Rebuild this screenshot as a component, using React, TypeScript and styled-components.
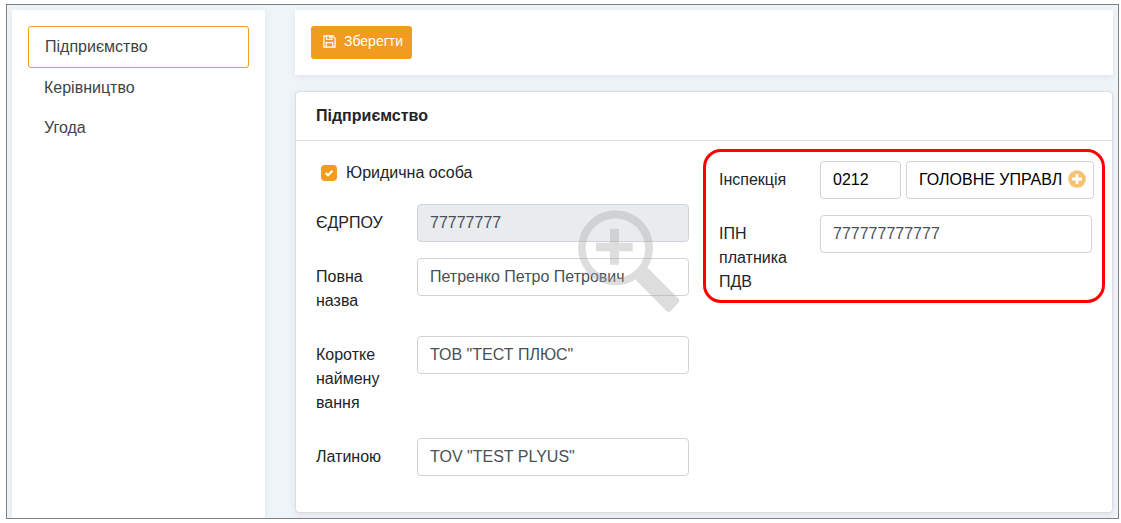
import React from 'react';
import styled, { createGlobalStyle } from 'styled-components';

const GlobalStyle = createGlobalStyle`
  *, *::before, *::after { box-sizing: border-box; }
  body {
    margin: 0;
    background: #fff;
    color: #212529;
    font: 400 16px/24px "Liberation Sans", Arial, sans-serif;
  }
`;

const Frame = styled.div`
  display: flex;
  align-items: flex-start;
  gap: 30px;
  width: 1113px;
  height: 515px;
  margin: 4px 0 0 6px;
  padding: 5px 5px 0;
  border: 1px solid #808080;
  background: #eff4f8;
  overflow: hidden;
`;

const Sidebar = styled.nav`
  flex: none;
  display: flex;
  flex-direction: column;
  width: 253px;
  height: 530px;
  padding: 16px;
  background: #fff;
  box-shadow: 0 2px 8px rgba(60, 90, 110, 0.08);
`;

const NavItem = styled.a<{ $active?: boolean }>`
  width: 221px;
  height: ${p => (p.$active ? 42 : 40)}px;
  padding: ${p => (p.$active ? '8px 16px' : '8px 16px')};
  border: ${p => (p.$active ? '1px solid #f29c1f' : '0')};
  border-radius: 3px;
  color: #3e4348;
`;

const Main = styled.main`
  display: flex;
  flex-direction: column;
  gap: 16px;
  width: 818px;
`;

const Toolbar = styled.div`
  height: 65px;
  padding: 16px;
  background: #fff;
  box-shadow: 0 2px 6px rgba(60, 90, 110, 0.09);
`;

const SaveButton = styled.button`
  display: flex;
  align-items: center;
  gap: 8px;
  width: 101px;
  height: 33px;
  padding: 0 0 2px 12px;
  border: 0;
  border-radius: 3px;
  background: #f29c1f;
  color: #fff;
  font: 14px/21px "Liberation Sans", Arial, sans-serif;
`;

const Card = styled.section`
  height: 422px;
  border: 1px solid #dcdddf;
  border-radius: 4px;
  background: #fff;
  box-shadow: 0 2px 6px rgba(60, 80, 100, 0.1);
`;

const CardHeader = styled.h2`
  height: 49px;
  margin: 0;
  padding: 12px 20px;
  border-bottom: 1px solid #dcdddf;
  font-size: 16px;
  line-height: 24px;
  font-weight: 700;
`;

const CardBody = styled.div`
  position: relative;
  display: flex;
  align-items: flex-start;
  padding: 8px 7px 0 20px;
`;

const LeftColumn = styled.div`
  display: flex;
  flex-direction: column;
  gap: 16px;
  width: 373px;
  padding-top: 12px;
`;

const CheckRow = styled.label`
  display: flex;
  align-items: center;
  gap: 9px;
  height: 24px;
  margin-bottom: 3px;
  padding-left: 5px;
`;

const CheckMark = styled.span`
  display: flex;
  width: 16px;
  height: 16px;
  border-radius: 4px;
  background: #f29c1f;
`;

const Field = styled.div`
  display: flex;
  align-items: flex-start;
`;

const Label = styled.label`
  flex: none;
  width: 101px;
  padding: 7px 0;
`;

const Input = styled.div<{ $width?: number; $disabled?: boolean; $dark?: boolean }>`
  display: flex;
  align-items: center;
  justify-content: space-between;
  flex: none;
  width: ${p => p.$width ?? 272}px;
  height: 38px;
  padding: 0 7px 0 12px;
  border: 1px solid #ced4da;
  border-radius: 4px;
  background: ${p => (p.$disabled ? '#e9ecef' : '#fff')};
  color: ${p => (p.$dark ? '#000' : '#495057')};
  white-space: nowrap;
`;

const InputGroup = styled.div`
  display: flex;
  gap: 5px;
`;

const Highlight = styled.div`
  display: flex;
  flex-direction: column;
  gap: 16px;
  width: 402px;
  height: 154px;
  margin-left: 14px;
  padding: 9px 0 0 13px;
  border: 3px solid #ff0000;
  border-radius: 18px;
`;

const Magnifier = styled.svg`
  position: absolute;
  left: 281px;
  top: 68px;
  pointer-events: none;
`;

const AddBadge = styled.svg`
  margin-bottom: 2px;
`;

const SaveIcon = () => (
  <svg width="13" height="13" viewBox="0 0 13 13" fill="none" stroke="#fff" strokeWidth="1.2">
    <path d="M.9.9h8.8l2.4 2.4v8.8H.9z" />
    <path d="M3.5.8v3.7h5.4V.8M3.2 12V7.7h6.6V12" />
    <path d="M7 .8v2.8" strokeWidth="1.6" />
  </svg>
);

const PlusIcon = () => (
  <AddBadge width="18" height="18" viewBox="0 0 18 18">
    <circle cx="9" cy="9" r="8.8" fill="#f6c272" />
    <path d="M9 4v10M4 9h10" stroke="#fff" strokeWidth="2.8" />
  </AddBadge>
);

const leftFields = [
  { label: ['ЄДРПОУ'], value: '77777777', disabled: true },
  { label: ['Повна', 'назва'], value: 'Петренко Петро Петрович' },
  { label: ['Коротке', 'наймену', 'вання'], value: 'ТОВ "ТЕСТ ПЛЮС"' },
  { label: ['Латиною'], value: 'TOV "TEST PLYUS"' },
];

const Lines = ({ lines }: { lines: string[] }) => (
  <>
    {lines.map((line, i) => (
      <React.Fragment key={line}>
        {i > 0 && <br />}
        {line}
      </React.Fragment>
    ))}
  </>
);

export default function App() {
  return (
    <>
      <GlobalStyle />
      <Frame>
        <Sidebar>
          <NavItem $active>Підприємство</NavItem>
          <NavItem>Керівництво</NavItem>
          <NavItem>Угода</NavItem>
        </Sidebar>
        <Main>
          <Toolbar>
            <SaveButton>
              <SaveIcon />
              Зберегти
            </SaveButton>
          </Toolbar>
          <Card>
            <CardHeader>Підприємство</CardHeader>
            <CardBody>
              <LeftColumn>
                <CheckRow>
                  <CheckMark>
                    <svg width="16" height="16" viewBox="0 0 16 16" fill="none">
                      <path d="M4.7 8 7 10.2l4.5-4.5" stroke="#fff" strokeWidth="2.1" />
                    </svg>
                  </CheckMark>
                  Юридична особа
                </CheckRow>
                {leftFields.map(f => (
                  <Field key={f.value}>
                    <Label><Lines lines={f.label} /></Label>
                    <Input $disabled={f.disabled}>{f.value}</Input>
                  </Field>
                ))}
              </LeftColumn>
              <Highlight>
                <Field>
                  <Label>Інспекція</Label>
                  <InputGroup>
                    <Input $width={81} $dark>0212</Input>
                    <Input $width={188} $dark>
                      ГОЛОВНЕ УПРАВЛ
                      <PlusIcon />
                    </Input>
                  </InputGroup>
                </Field>
                <Field>
                  <Label><Lines lines={['ІПН', 'платника', 'ПДВ']} /></Label>
                  <Input>777777777777</Input>
                </Field>
              </Highlight>
              <Magnifier width="104" height="104" viewBox="577 209 104 104">
                <g fill="#a8a8a8" opacity="0.38">
                  <path
                    fillRule="evenodd"
                    d="M647.3 267.6 678.3 298.6q2 2.2 0 4.4l-7.6 7.9q-2 2-4.2 0L635.3 279.6A37.4 37.4 0 1 1 647.3 267.6zM615.4 218.6a29.7 29.7 0 1 0 .1 0z"
                  />
                  <path d="M610 228.7h9v14h13.7v8.6H619v13.4h-9v-13.4h-14v-8.6h14z" />
                </g>
              </Magnifier>
            </CardBody>
          </Card>
        </Main>
      </Frame>
    </>
  );
}
